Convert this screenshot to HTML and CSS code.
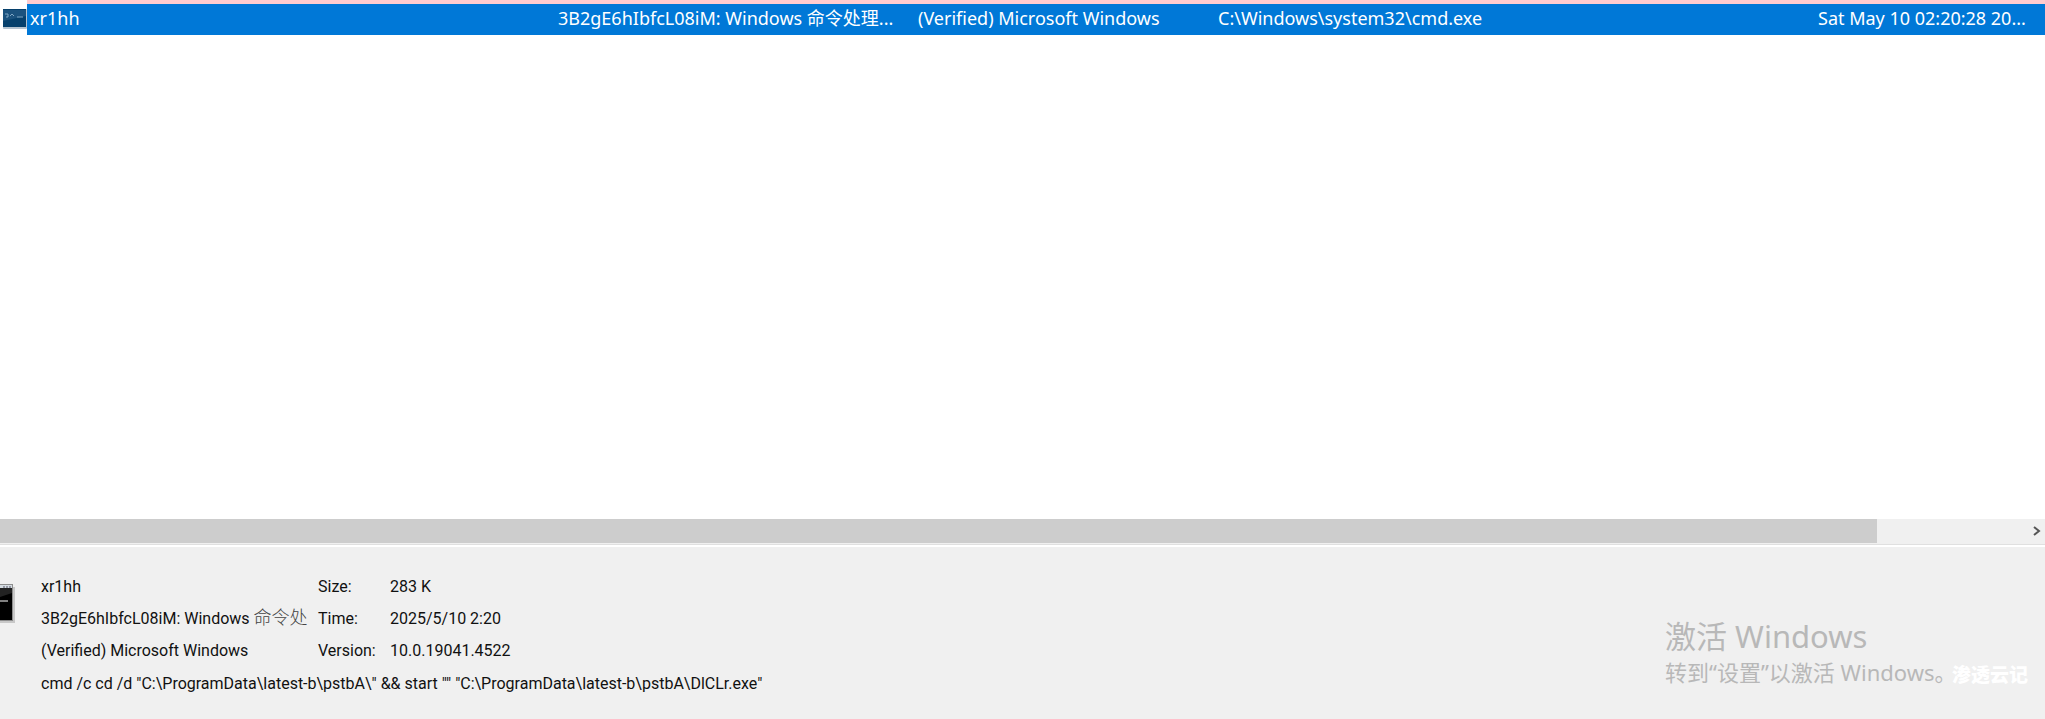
FILE: index.html
```
<!DOCTYPE html>
<html lang="zh-CN">

<head>
    <meta charset="UTF-8">
    <meta name="viewport" content="width=device-width, initial-scale=1.0">
    <title>Autoruns</title>
    <link rel="stylesheet" href="styles.css">
</head>

<body>
    <main class="list">
        <svg class="row-icon" viewBox="0 0 24 20" aria-hidden="true">
            <rect x="0" y="0" width="24" height="20" rx="1" fill="#b4c3d0" />
            <rect x="0" y="0" width="23" height="18" fill="#06406c" />
            <path d="M0 1h23v6L0 12z" fill="#1b527e" />
            <path d="M2 5h3v3H3M7 7l2-2 2 2M14 8h6" fill="none" stroke="#7fa6c4" stroke-width="1" />
        </svg>
        <table class="entries">
            <colgroup>
                <col class="col-name">
                <col class="col-description">
                <col class="col-publisher">
                <col class="col-path">
                <col class="col-time">
            </colgroup>
            <tbody>
                <tr class="selected">
                    <td>xr1hh</td>
                    <td>3B2gE6hIbfcL08iM: Windows 命令处理...</td>
                    <td>(Verified) Microsoft Windows</td>
                    <td>C:\Windows\system32\cmd.exe</td>
                    <td>Sat May 10 02:20:28 20...</td>
                </tr>
            </tbody>
        </table>
    </main>

    <div class="scrollbar">
        <div class="thumb"></div>
        <button class="scroll-right" type="button" aria-label="Scroll right">
            <svg viewBox="0 0 8 10" width="8" height="10">
                <path d="M1 1l5 4-5 4" fill="none" stroke="#555" stroke-width="2" />
            </svg>
        </button>
    </div>

    <section class="details">
        <svg class="details-icon" viewBox="0 0 15 40" aria-hidden="true">
            <rect x="0" y="3" width="15" height="36" fill="#c8c8c8" />
            <rect x="0" y="0" width="13" height="37" fill="#8d8d8d" />
            <rect x="0" y="1" width="12" height="3" fill="#d5dce2" />
            <path d="M3 3h2M6 3h2M9 3h2" stroke="#556" stroke-width="1" />
            <rect x="0" y="4" width="12" height="32" fill="#000" />
            <path d="M0 4h12v5L0 13z" fill="#222" />
            <path d="M0 17h8" stroke="#fff" stroke-width="1" />
        </svg>
        <div class="info">
            <table class="info-table">
                <tbody>
                    <tr>
                        <td class="info-name">xr1hh</td>
                        <th scope="row">Size:</th>
                        <td>283 K</td>
                    </tr>
                    <tr>
                        <td class="info-name">3B2gE6hIbfcL08iM: Windows <span class="cjk">命令处</span></td>
                        <th scope="row">Time:</th>
                        <td>2025/5/10 2:20</td>
                    </tr>
                    <tr>
                        <td class="info-name">(Verified) Microsoft Windows</td>
                        <th scope="row">Version:</th>
                        <td>10.0.19041.4522</td>
                    </tr>
                </tbody>
            </table>
            <p class="command">cmd /c cd /d "C:\ProgramData\latest-b\pstbA\" &amp;&amp; start "" "C:\ProgramData\latest-b\pstbA\DlCLr.exe"</p>
        </div>
    </section>

    <!-- Activation notice floats over the bottom right corner -->
    <aside class="activate">
        <p class="activate-title">激活 Windows</p>
        <p class="activate-text">转到“设置”以激活 Windows。</p>
    </aside>
    <span class="brand">渗透云记</span>
</body>

</html>
```

FILE: styles.css
```
* {
    box-sizing: border-box;
}

body {
    display: flex;
    flex-direction: column;
    min-height: 100vh;
    margin: 0;
    background-color: #fff;
    color: #111;
    font-family: "Noto Sans", "Noto Sans CJK SC", sans-serif;
    font-size: 16px;
}

p {
    margin: 0;
}

.list {
    display: flex;
    flex: 1;
    align-items: flex-start;
}

.row-icon {
    flex: none;
    width: 24px;
    height: 20px;
    margin: 9px 0 0 3px;
}

.entries {
    flex: 1;
    table-layout: fixed;
    width: 100%;
    border-spacing: 0;
    border-top: 4px solid #ffcccf;
}

.col-name {
    width: 528px;
}

.col-description {
    width: 360px;
}

.col-publisher {
    width: 300px;
}

.col-path {
    width: 600px;
}

.selected {
    background-color: #0078d7;
    color: #fff;
}

.entries td {
    height: 31px;
    padding: 0 0 0 3px;
    font-size: 18px;
    line-height: 28px;
    vertical-align: top;
    white-space: nowrap;
}

.scrollbar {
    display: flex;
    align-items: flex-start;
    justify-content: space-between;
    height: 26px;
    background-color: #f0f0f0;
    border-bottom: 1px solid #e0e0e0;
}

.thumb {
    width: 91.8%;
    height: 24px;
    background-color: #cdcdcd;
}

.scroll-right {
    display: flex;
    align-items: center;
    justify-content: center;
    width: 16px;
    height: 24px;
    padding: 0;
    border: none;
    background: none;
}

.details {
    display: flex;
    align-items: flex-start;
    gap: 26px;
    height: 174px;
    padding-top: 24px;
    border-top: 2px solid #fff;
    background-color: #f0f0f0;
    font-family: Roboto, "Noto Sans CJK SC", sans-serif;
}

.details-icon {
    flex: none;
    width: 15px;
    height: 40px;
    margin-top: 13px;
}

.info-table {
    border-collapse: collapse;
}

.info-table td,
.info-table th {
    height: 32px;
    padding: 0;
    font-weight: normal;
    line-height: 24px;
    text-align: left;
    white-space: nowrap;
}

.info-table .info-name {
    width: 277px;
}

.info-table th {
    width: 72px;
}

.cjk {
    font-family: "Noto Sans CJK SC", sans-serif;
    font-size: 18px;
    font-weight: 300;
    line-height: 1;
    color: #444;
}

.command {
    margin-top: 5px;
    line-height: 24px;
    white-space: nowrap;
}

.activate {
    position: absolute;
    right: 96px;
    bottom: 31px;
    width: 284px;
    color: #b8b8b8;
    white-space: nowrap;
}

.activate-title {
    font-size: 31px;
    line-height: 40px;
}

.activate-text {
    font-size: 22px;
    line-height: 32px;
}

.brand {
    position: absolute;
    right: 17px;
    bottom: 32px;
    color: #fff;
    font-size: 19px;
    font-weight: 900;
    line-height: 24px;
}
```
